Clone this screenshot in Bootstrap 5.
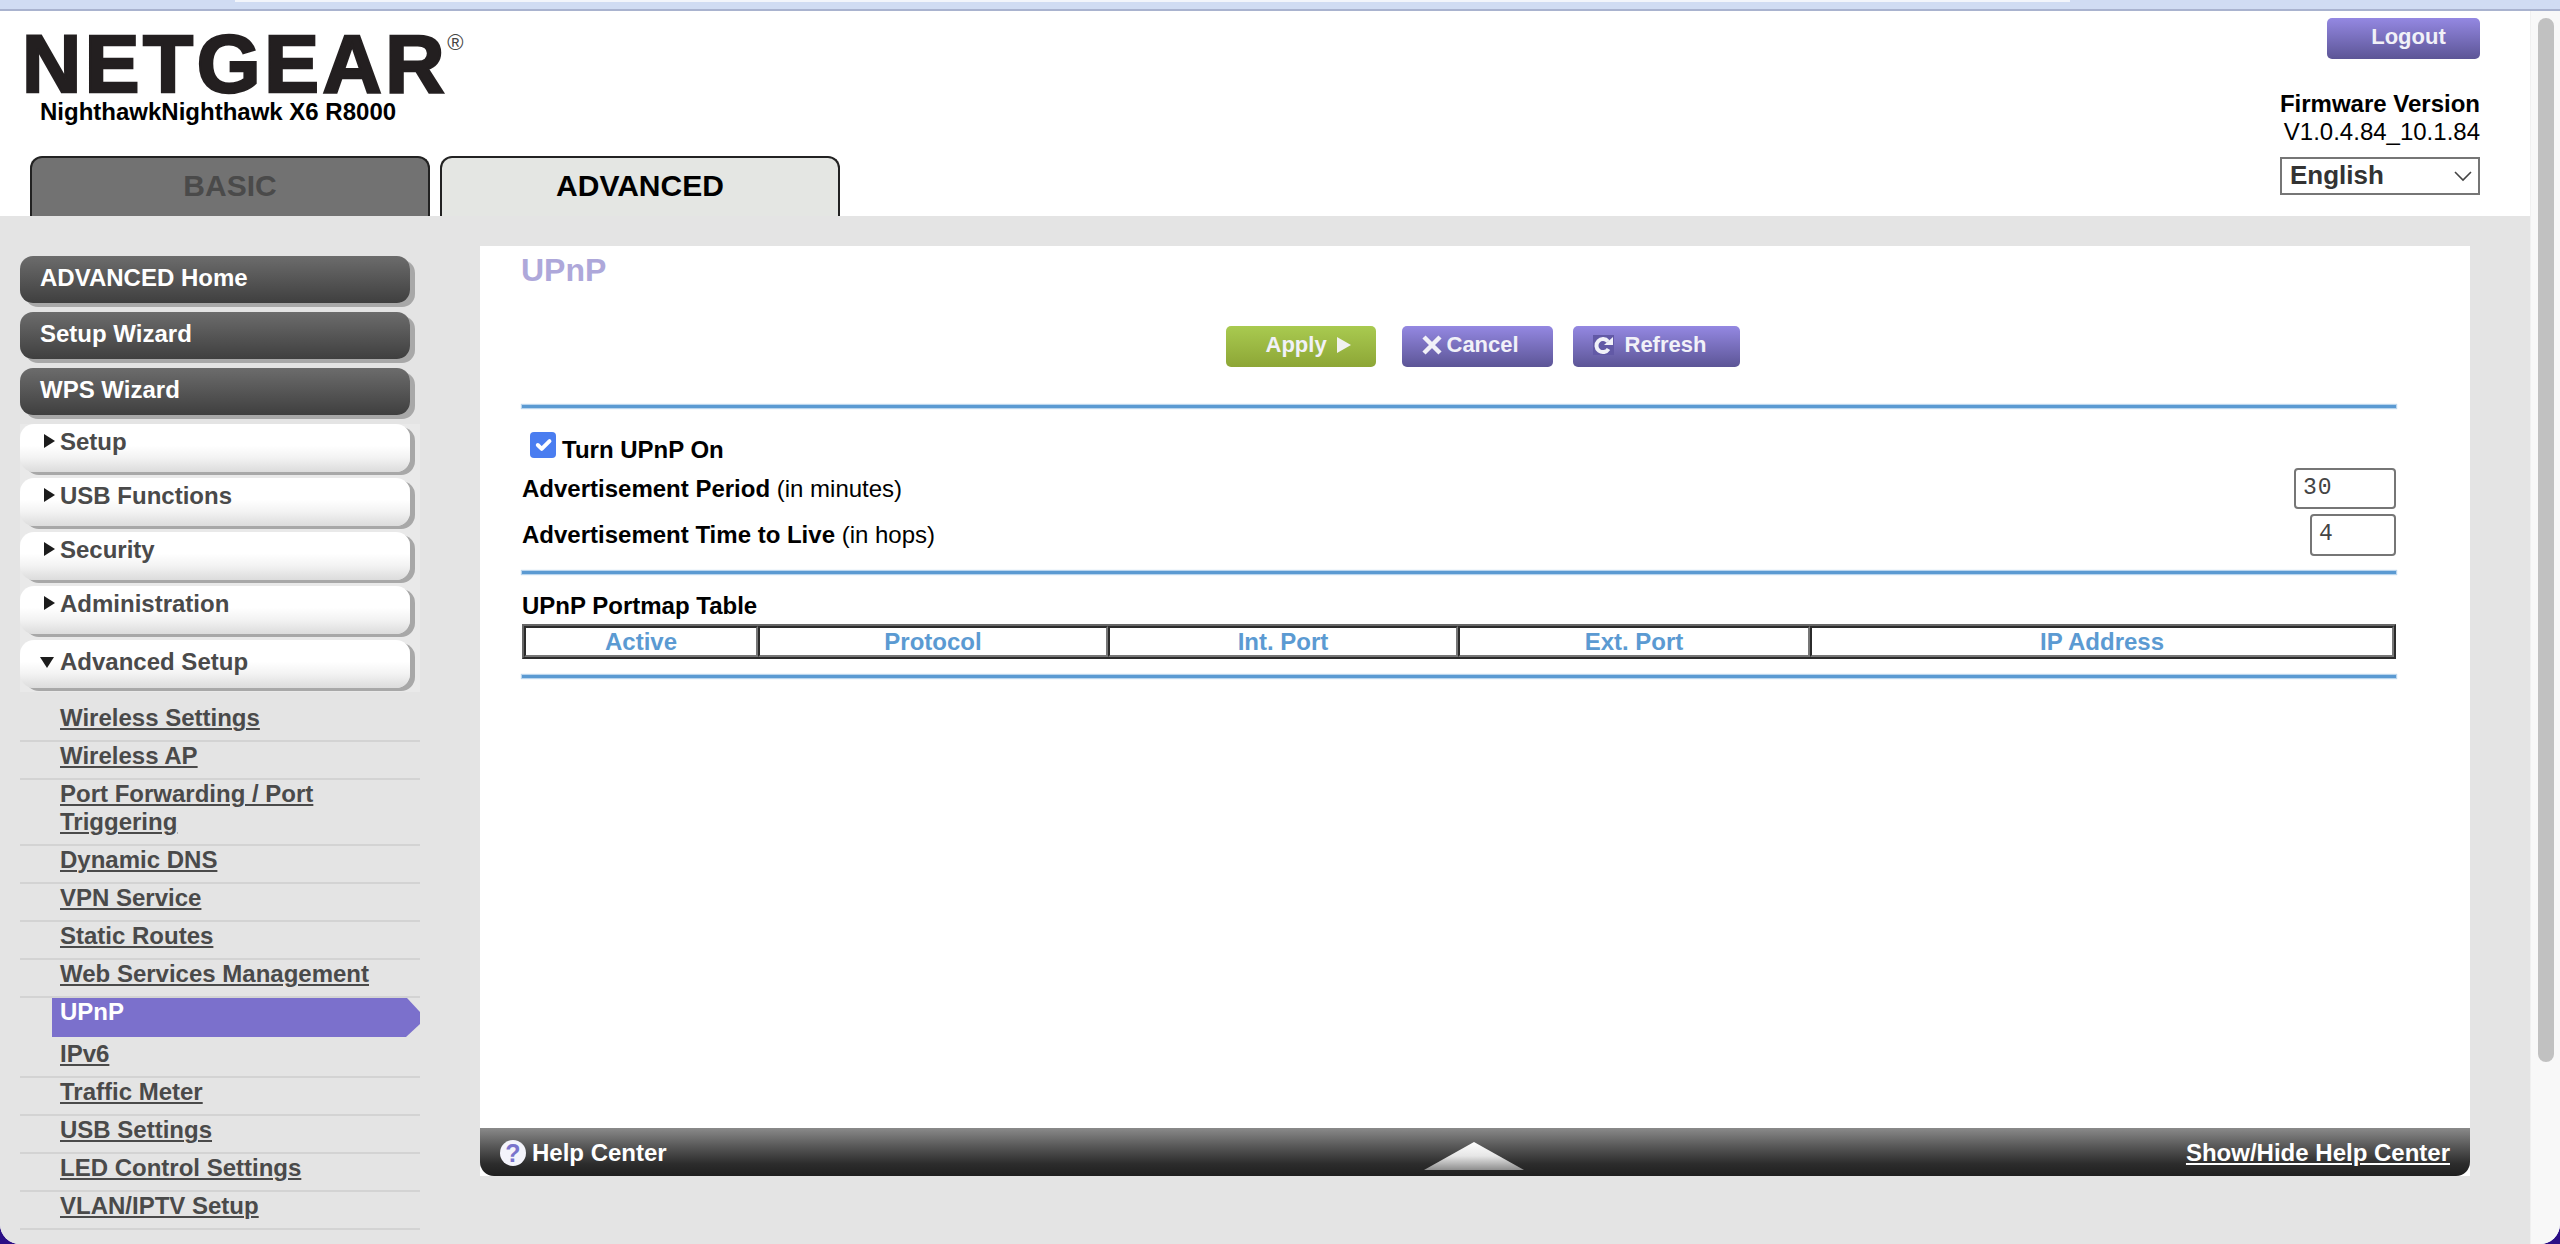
<!DOCTYPE html>
<html lang="en">
<head>
  <meta charset="UTF-8">
  <meta name="viewport" content="width=device-width, initial-scale=1.0">
  <title>NETGEAR Router - UPnP</title>

  <!-- Bootstrap CSS -->
  <link rel="stylesheet" href="https://cdn.jsdelivr.net/npm/bootstrap@5.3.1/dist/css/bootstrap.min.css">

  <style>
    html, body { height: 1244px; overflow: hidden; }
    body { margin: 0; background: #2b0f86; font-family: "Liberation Sans", Arial, sans-serif; color: #000; }
    .rt-window { height: 1244px; overflow: hidden; border-radius: 0 0 20px 20px; background: #fff; }
    .rt-strip { height: 11px; background: #d0dcf3; border-bottom: 2px solid #a9b3cf; position: relative; }
    .rt-strip::before { content: ""; position: absolute; left: 235px; right: 490px; top: 0; height: 2px; background: #f2f5fb; }
    .rt-page { width: 2530px; height: 1233px; }
    .rt-track { width: 30px; height: 1233px; background: #f8f8f8; border-left: 1px solid #f0f0f0; padding: 7px 6px 0 7px; }
    .rt-thumb { height: 1044px; background: #c1c1c1; border-radius: 8px; }

    /* header */
    .rt-head { height: 205px; padding-right: 50px; background: #fff; }
    .rt-logo { margin: 19px 0 0 22px; font-size: 82px; line-height: 68px; font-weight: 700; letter-spacing: 3.6px; color: #231f20; -webkit-text-stroke: 2.5px #231f20; white-space: nowrap; }
    .rt-logo sup { font-size: 22px; font-weight: 400; letter-spacing: 0; -webkit-text-stroke: 0; top: -42px; left: -1px; position: relative; vertical-align: baseline; color: #444; }
    .rt-model { margin-left: 40px; font-size: 24px; line-height: 28px; font-weight: 700; }
    .rt-tabs { margin: 30px 0 0 30px; gap: 10px; }
    .rt-tab { width: 400px; height: 60px; border: 2px solid #222; border-bottom: 0; border-radius: 12px 12px 0 0; text-align: center; font-size: 30px; line-height: 56px; font-weight: 700; }
    .rt-tab-off { background: #727272; color: #4a4a4a; }
    .rt-tab-on { background: #e4e6e3; color: #000; }
    .rt-fw { margin-top: 31px; font-size: 24px; line-height: 28px; text-align: right; }
    .rt-lang.form-select { width: 200px; height: 38px; margin-top: 11px; padding: 0 0 2px 8px; border: 2px solid #767676; border-radius: 0; font-size: 26px; line-height: 30px; font-weight: 700; color: #333; background-image: url("data:image/svg+xml,%3csvg xmlns='http://www.w3.org/2000/svg' viewBox='0 0 20 12'%3e%3cpath fill='none' stroke='%23444' stroke-width='1.6' d='M2 2l8 8 8-8'/%3e%3c/svg%3e"); background-position: right 5px center; background-size: 20px 12px; box-shadow: none; }

    /* buttons */
    .btn.rt-btn { display: inline-flex; align-items: center; padding: 0 0 4px; border: 0; border-radius: 5px; color: #f1f1f8; font-weight: 700; font-size: 22px; line-height: 26px; }
    .btn.rt-purple { background: linear-gradient(#9488e2, #5c5596); }
    .btn.rt-green { background: linear-gradient(#a9ca50, #8da636); }
    .btn.rt-logout { width: 153px; height: 41px; margin-top: 7px; padding-left: 10px; justify-content: center; }
    .btn.rt-apply { width: 150px; height: 41px; padding-left: 40px; gap: 10px; }
    .btn.rt-cancel { width: 151px; height: 41px; margin-left: 26px; padding-left: 20px; gap: 5px; }
    .btn.rt-refresh { width: 167px; height: 41px; margin-left: 20px; padding-left: 20px; gap: 11px; }

    /* main area */
    .rt-main { height: 1028px; background: #e4e4e4; padding-top: 30px; }
    .rt-side { width: 400px; margin: 10px 0 0 20px; }
    .rt-sub a { color: inherit; }
    .rt-dark { display: block; width: 390px; height: 47px; margin-bottom: 9px; padding-left: 20px; border-radius: 13px; background: linear-gradient(#6c6c6c, #3f3f3f); box-shadow: 5px 4px 0 #a8a8a8; color: #fff; font-size: 24px; line-height: 44px; font-weight: 700; }
    .rt-dark:hover { color: #fff; }
    .rt-lightwrap { height: 268px; background: #e9e9e9; }
    .rt-light { position: relative; width: 390px; height: 48px; margin-bottom: 6px; padding-left: 40px; border-radius: 14px; background: linear-gradient(#fff 45%, #f3f3f3 70%, #dcdcdc); box-shadow: 5px 3px 0 #a8a8a8; color: #4a4a4a; font-size: 24px; line-height: 36px; font-weight: 700; }
    .rt-light::before { content: ""; position: absolute; left: 24px; top: 10px; border-style: solid; border-width: 7px 0 7px 11px; border-color: transparent transparent transparent #1c1c1c; }
    .rt-light.rt-open { line-height: 44px; }
    .rt-light.rt-open::before { left: 20px; top: 17px; border-width: 11px 7.5px 0 7.5px; border-color: #1c1c1c transparent transparent transparent; }
    .rt-sub { margin-top: 12px; }
    .rt-sub li { padding: 0 0 8px 40px; border-bottom: 2px solid #d3d3d3; font-size: 24px; line-height: 28px; font-weight: 700; color: #4a4a4a; }
    .rt-sub a { text-underline-offset: 2px; text-decoration-thickness: 2px; }
    .rt-sub li.rt-active { height: 42px; padding: 0 0 3px 32px; border: 0; }
    .rt-active span { display: block; height: 39px; padding-left: 8px; background: #7b70cc; color: #fff; line-height: 28px; clip-path: polygon(0 0, 355px 0, 368px 14px, 368px 26px, 354px 39px, 0 39px); }

    /* content panel */
    .rt-panel { width: 1990px; height: 930px; margin-left: 60px; background: #fff; }
    .rt-body { padding: 6px 74px 0 42px; }
    .rt-title { margin: 0 0 0 -1px; font-size: 32px; line-height: 36px; font-weight: 700; color: #aea8da; }
    .rt-actions { margin-top: 38px; padding-left: 47px; }
    hr.rt-rule { height: 3px; margin: 0; border: 0; opacity: 1; background: #5b9ad2; box-shadow: 0 0 1px 1px #b9d5ee; }
    .rt-check { height: 32px; margin-top: 24px; padding-left: 8px; font-size: 24px; font-weight: 700; }
    .rt-check .form-check-input { width: 26px; height: 26px; margin: 0; border-radius: 4px; border: 0; background-color: #4a7df0; }
    .rt-check label { margin-left: 6px; line-height: 30px; padding-top: 3px; }
    .rt-field { font-size: 24px; line-height: 41px; }
    .rt-field input { height: 100%; border: 2px solid #767676; border-radius: 4px; padding: 0 0 2px 7px; font-family: "Liberation Mono", monospace; font-size: 23px; letter-spacing: 1px; color: #444; outline: 0; }
    .rt-field1 { height: 41px; margin-top: 4px; }
    .rt-field1 input { width: 102px; }
    .rt-field2 { height: 42px; margin-top: 5px; }
    .rt-field2 input { width: 86px; }
    .rt-portmap { margin-top: 17px; font-size: 24px; line-height: 30px; font-weight: 700; }
    .rt-grid { width: 100%; height: 35px; margin-top: 3px; table-layout: fixed; border-collapse: separate; border-spacing: 0; border: 2px solid; border-color: #666 #2b2b2b #2b2b2b #666; }
    .rt-grid th { padding: 0; text-align: center; font-size: 24px; line-height: 27px; color: #5b9ad2; border: 2px solid; border-color: #2b2b2b #777 #777 #2b2b2b; }
    .rt-grid th:nth-child(1) { width: 234px; }
    .rt-grid th:nth-child(2), .rt-grid th:nth-child(3) { width: 350px; }
    .rt-grid th:nth-child(4) { width: 352px; }

    /* help footer */
    .rt-foot { position: relative; height: 48px; padding: 2px 20px 0 20px; border-radius: 0 0 14px 14px; background: linear-gradient(#8a8a8a, #5c5c5c 35%, #2c2c2c 75%, #1f1f1f); color: #fff; font-size: 24px; font-weight: 700; }
    .rt-foot a { color: #fff; }
    .rt-help { display: inline-flex; align-items: center; gap: 6px; }
    .rt-qm { width: 26px; height: 26px; border-radius: 50%; background: #f4f4fb; color: #7a74cc; font-size: 25px; line-height: 26px; text-align: center; }
    .rt-tri { position: absolute; left: 944px; top: 14px; }
  </style>
</head>
<body>
  <div class="rt-window">
    <div class="rt-strip"></div>
    <div class="d-flex">
      <div class="rt-page">

        <!-- Header -->
        <div class="rt-head d-flex justify-content-between">
          <div>
            <div class="rt-logo">NETGEAR<sup>®</sup></div>
            <div class="rt-model">NighthawkNighthawk X6 R8000</div>
            <div class="rt-tabs d-flex">
              <div class="rt-tab rt-tab-off">BASIC</div>
              <div class="rt-tab rt-tab-on">ADVANCED</div>
            </div>
          </div>
          <div class="d-flex flex-column align-items-end">
            <button type="button" class="btn rt-btn rt-purple rt-logout">Logout</button>
            <div class="rt-fw"><b>Firmware Version</b><br>V1.0.4.84_10.1.84</div>
            <select class="form-select rt-lang"><option>English</option></select>
          </div>
        </div>

        <div class="rt-main d-flex">
          <!-- Side menu -->
          <div class="rt-side">
            <a class="rt-dark text-decoration-none" href="#">ADVANCED Home</a>
            <a class="rt-dark text-decoration-none" href="#">Setup Wizard</a>
            <a class="rt-dark text-decoration-none" href="#">WPS Wizard</a>
            <div class="rt-lightwrap">
              <div class="rt-light">Setup</div>
              <div class="rt-light">USB Functions</div>
              <div class="rt-light">Security</div>
              <div class="rt-light">Administration</div>
              <div class="rt-light rt-open">Advanced Setup</div>
            </div>
            <ul class="rt-sub list-unstyled mb-0">
              <li><a href="#">Wireless Settings</a></li>
              <li><a href="#">Wireless AP</a></li>
              <li><a href="#">Port Forwarding / Port<br>Triggering</a></li>
              <li><a href="#">Dynamic DNS</a></li>
              <li><a href="#">VPN Service</a></li>
              <li><a href="#">Static Routes</a></li>
              <li><a href="#">Web Services Management</a></li>
              <li class="rt-active"><span>UPnP</span></li>
              <li><a href="#">IPv6</a></li>
              <li><a href="#">Traffic Meter</a></li>
              <li><a href="#">USB Settings</a></li>
              <li><a href="#">LED Control Settings</a></li>
              <li><a href="#">VLAN/IPTV Setup</a></li>
            </ul>
          </div>

          <!-- UPnP panel -->
          <div class="rt-panel d-flex flex-column">
            <div class="rt-body flex-grow-1">
              <h1 class="rt-title">UPnP</h1>
              <div class="rt-actions d-flex justify-content-center">
                <button type="button" class="btn rt-btn rt-green rt-apply">Apply
                  <svg width="14" height="16" viewBox="0 0 14 16"><path d="M0 0L14 8L0 16Z" fill="#f1f1f1"/></svg>
                </button>
                <button type="button" class="btn rt-btn rt-purple rt-cancel">
                  <svg width="20" height="20" viewBox="0 0 20 20"><path d="M2 2L18 18M18 2L2 18" stroke="#f1f1f8" stroke-width="4.5" fill="none"/></svg>Cancel
                </button>
                <button type="button" class="btn rt-btn rt-purple rt-refresh">
                  <svg width="21" height="20" viewBox="0 0 21 20"><rect width="21" height="20" fill="#6259a6"/><path d="M15 6.5A6.5 6.5 0 1 0 15.5 14" stroke="#f1f1f8" stroke-width="4" fill="none"/><path d="M11 10H20V2Z" fill="#f1f1f8"/></svg>Refresh
                </button>
              </div>
              <hr class="rt-rule" style="margin-top:38px">
              <div class="rt-check d-flex align-items-start">
                <input class="form-check-input" type="checkbox" id="upnpOn" checked>
                <label for="upnpOn">Turn UPnP On</label>
              </div>
              <div class="rt-field rt-field1 d-flex justify-content-between">
                <div><b>Advertisement Period</b> (in minutes)</div>
                <input type="text" value="30">
              </div>
              <div class="rt-field rt-field2 d-flex justify-content-between">
                <div><b>Advertisement Time to Live</b> (in hops)</div>
                <input type="text" value="4">
              </div>
              <hr class="rt-rule" style="margin-top:15px">
              <div class="rt-portmap">UPnP Portmap Table</div>
              <table class="rt-grid">
                <thead>
                  <tr><th>Active</th><th>Protocol</th><th>Int. Port</th><th>Ext. Port</th><th>IP Address</th></tr>
                </thead>
              </table>
              <hr class="rt-rule" style="margin-top:16px">
            </div>

            <div class="rt-foot d-flex justify-content-between align-items-center">
              <span class="rt-help"><span class="rt-qm">?</span>Help Center</span>
              <svg class="rt-tri" width="100" height="28" viewBox="0 0 100 28">
                <defs><linearGradient id="triFill" x1="0" y1="0" x2="0" y2="1"><stop offset="0" stop-color="#fff"/><stop offset="0.5" stop-color="#e6e6e6"/><stop offset="1" stop-color="#8e8e8e"/></linearGradient></defs>
                <path d="M50 0L100 28H0Z" fill="url(#triFill)"/>
              </svg>
              <a href="#">Show/Hide Help Center</a>
            </div>
          </div>
        </div>
      </div>

      <!-- Browser scrollbar -->
      <div class="rt-track"><div class="rt-thumb"></div></div>
    </div>
  </div>

  <!-- Bootstrap Bundle JS -->
  <script src="https://cdn.jsdelivr.net/npm/bootstrap@5.3.1/dist/js/bootstrap.bundle.min.js"></script>
</body>
</html>
